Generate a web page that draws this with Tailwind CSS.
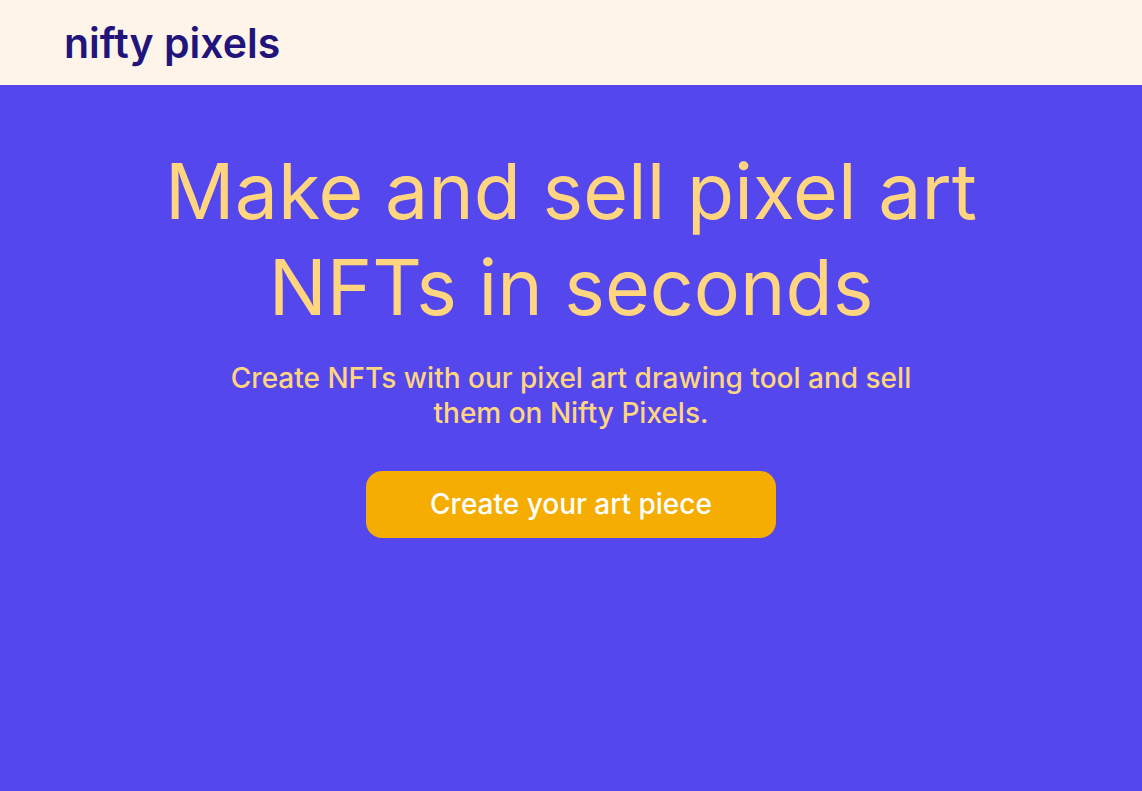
<!DOCTYPE html>
<html lang="en">
<head>
<meta charset="utf-8">
<meta name="viewport" content="width=device-width, initial-scale=1">
<title>Nifty Pixels</title>
<script src="https://cdn.jsdelivr.net/npm/@tailwindcss/browser@4"></script>
</head>
<body class="flex min-h-screen flex-col bg-[#5447ee] font-['Inter',sans-serif]">
<header class="bg-[#fff4e9] px-16 pt-[19px] pb-[18px]">
<a href="#" class="block w-fit text-[41px] leading-12 font-semibold text-[#21157c]">nifty pixels</a>
</header>
<main class="flex flex-1 flex-col items-center px-6 pt-[58px] text-center text-[#ffd57f]">
<h1 class="max-w-[900px] text-[77px] leading-24 font-normal">Make and sell pixel art NFTs in seconds</h1>
<p class="mt-[26px] max-w-[720px] text-[28px] leading-[35px] font-medium">Create NFTs with our pixel art drawing tool and sell them on Nifty Pixels.</p>
<button type="button" class="mt-10 w-full max-w-[410px] cursor-pointer rounded-2xl bg-[#f4ad00] py-4 text-[28px] leading-[35px] font-medium text-white">Create your art piece</button>
</main>
</body>
</html>
